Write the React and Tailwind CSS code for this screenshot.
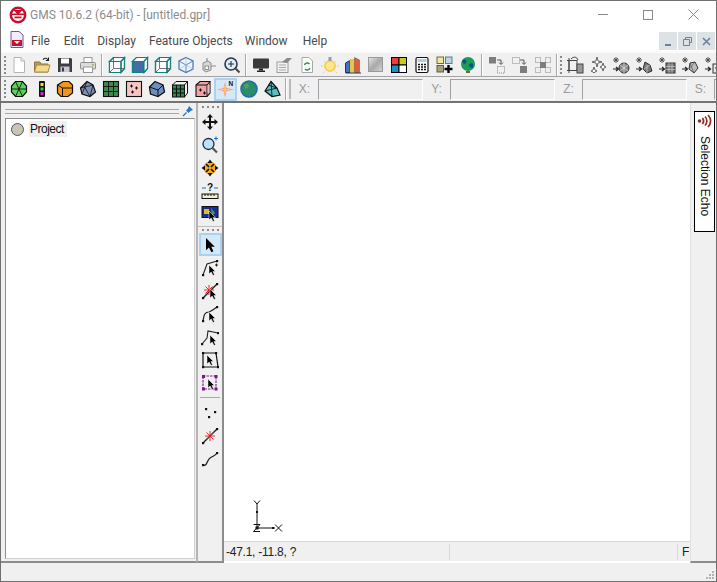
import React from 'react';

const S = ({ children, size = 18, className = '' }) => (
  <svg width={size} height={size} viewBox="0 0 18 18" className={`block shrink-0 ${className}`}>
    {children}
  </svg>
);

const Cube = ({ front, top = 'none', side = 'none', line = '#14807f', back }) => (
  <S>
    <path d="M5.500 1.500H16.500V12.500L13 16.500H1.500V5.500Z" fill="#fff" stroke={line} strokeWidth="1.200" />
    <path d="M1.500 5.500H13V16.500H1.500Z" fill={front} stroke={line} strokeWidth="1.200" />
    <path d="M1.500 5.500L5.500 1.500H16.500L13 5.500Z" fill={top} stroke={line} strokeWidth="1.200" />
    <path d="M13 5.500L16.500 1.500V12.500L13 16.500Z" fill={side} stroke={line} strokeWidth="1.200" />
    {back && <path d="M5.500 1.500V12.500H16.500M5.500 12.500L1.500 16.500" fill="none" stroke="#555" strokeWidth=".8" />}
  </S>
);

const Grip = () => (
  <div className="flex flex-col gap-[2px] w-[3px] shrink-0">
    <i className="block w-[2px] h-[2px] bg-[#8a8a8a]" />
    <i className="block w-[2px] h-[2px] bg-[#8a8a8a]" />
    <i className="block w-[2px] h-[2px] bg-[#8a8a8a]" />
    <i className="block w-[2px] h-[2px] bg-[#8a8a8a]" />
    <i className="block w-[2px] h-[2px] bg-[#8a8a8a]" />
  </div>
);

const GripH = () => (
  <div className="flex gap-[3px] justify-center py-[2px]">
    <i className="block w-[2px] h-[2px] bg-[#8a8a8a]" />
    <i className="block w-[2px] h-[2px] bg-[#8a8a8a]" />
    <i className="block w-[2px] h-[2px] bg-[#8a8a8a]" />
    <i className="block w-[2px] h-[2px] bg-[#8a8a8a]" />
  </div>
);

const Tool = ({ children, active }) => (
  <div className={`w-[23px] h-[23px] flex items-center justify-center shrink-0 ${active ? 'bg-[#d5e8f7] border-2 border-[#a9d2f0]' : ''}`}>
    {children}
  </div>
);

const Sep = () => <div className="w-[2px] h-[22px] mx-[2px] shrink-0 bg-[#a8a8a8] border-r border-white" />;

const Arrow = ({ x = 9, y = 7 }) => (
  <path transform={`translate(${x} ${y})`} d="M0 0V9L2.200 7L4 10.500L5.500 9.800L3.900 6.500H6.500Z" fill="#000" stroke="#fff" strokeWidth=".5" />
);

const GrayAdd = ({ children }) => (
  <S>
    <path d="M4 1V7M1 4H7M2 2L6 6M6 2L2 6" stroke="#444" strokeWidth=".9" />
    <path d="M1 13H6M4 11L6.500 13L4 15" stroke="#222" strokeWidth="1.200" fill="none" />
    {children}
  </S>
);

const toolbarOne = [
  <S><path d="M4 1.500H11L14.500 5V16.500H4Z" fill="#fff" stroke="#b4b4b4" /><path d="M11 1.500V5H14.500" fill="#eee" stroke="#b4b4b4" /></S>,
  <S><path d="M1.500 6H7L8 8H15V16H1.500Z" fill="#b89a58" stroke="#8b7440" /><path d="M3.500 9H17L15 16H1.500Z" fill="#f3d98e" stroke="#a98d4c" /><path d="M10 3.500C12 1.500 14 2 15 4M15.500 1.500V4.500H12.800" fill="none" stroke="#222" strokeWidth="1.100" /></S>,
  <S><path d="M2 2H15L16 3V16H2Z" fill="#3d3d44" /><rect x="5" y="2.500" width="8" height="5" fill="#fff" /><rect x="4.500" y="10.500" width="9" height="5.500" fill="#c7c9cf" /><rect x="6" y="11.500" width="2" height="4" fill="#3d3d44" /></S>,
  <S><rect x="5" y="1.500" width="8" height="5" fill="#fff" stroke="#9a9a9a" /><rect x="1.500" y="6.500" width="15" height="6.500" rx="1" fill="#dcdcdc" stroke="#8e8e8e" /><rect x="4.500" y="11" width="9" height="5.500" fill="#fff" stroke="#9a9a9a" /><rect x="13" y="8" width="2" height="1.500" fill="#a4b83c" /></S>,
  'sep',
  <Cube front="#fff" back />,
  <Cube front="#3f6ea8" side="#fff" top="#fff" />,
  <Cube front="none" back />,
  <S><path d="M9 1.500L16 5V13L9 16.500L2 13V5Z" fill="#eef3f9" stroke="#4a7fb5" strokeWidth="1.300" /><path d="M2 5L9 9L16 5M9 9V16.500" fill="none" stroke="#4a7fb5" strokeWidth=".9" /><path d="M9 1.500V9M2 13L9 9L16 13" fill="none" stroke="#a8c2dc" strokeWidth=".7" /></S>,
  <S><path d="M3 7L8 5L11 7V14L6 16L3 14Z" fill="#d8d8d8" stroke="#8c8c8c" /><rect x="5" y="10" width="3.500" height="3.500" fill="#fff" stroke="#777" strokeWidth=".8" /><path d="M11 10H16M7 2V5" stroke="#8c8c8c" strokeWidth="1.200" /></S>,
  <S><circle cx="8" cy="8" r="6" fill="#dfeefa" stroke="#263a4a" strokeWidth="1.600" /><path d="M5 8H11M8 5V11" stroke="#222" strokeWidth="1" /><path d="M12.500 12.500L16.500 16.500" stroke="#444" strokeWidth="2" /></S>,
  'sep',
  <S><rect x="1" y="2.500" width="16" height="10" rx="1" fill="#3a3a3a" /><rect x="7" y="12.500" width="4" height="2" fill="#222" /><rect x="5" y="14.500" width="8" height="1.500" fill="#222" /></S>,
  <S><rect x="2" y="6" width="11" height="10.500" fill="#f1f1f1" stroke="#9c9c9c" /><path d="M4 9H11M4 11.500H11M4 14H11" stroke="#aaa" /><path d="M7 6L12 2H17L12 7Z" fill="#888" /></S>,
  <S><path d="M4 1.500H11L14.500 5V16.500H4Z" fill="#fff" stroke="#a8a8a8" /><path d="M6.500 9A3 3 0 0 1 11.500 8M12 12A3 3 0 0 1 7 13" fill="none" stroke="#1f9d45" strokeWidth="1.500" /></S>,
  <S><circle cx="9" cy="10" r="5" fill="#ffe98a" stroke="#f4cf5f" strokeWidth="2" /><rect x="7.500" y="1" width="3" height="4" fill="#9b9b9b" /><path d="M2 10H0M18 10H16M3.500 15.500L2 17M14.500 15.500L16 17M3 5L4 6M15 5L14 6" stroke="#f4cf5f" /></S>,
  <S><path d="M1.500 7L5 5H6V16.500H1.500Z" fill="#3f76c4" stroke="#24354f" /><path d="M6 3H10.500V16.500H6Z" fill="#eac34a" /><path d="M10.500 1.500L15.500 4V16.500H10.500Z" fill="#d9603c" stroke="#704030" strokeWidth=".5" /><path d="M1.500 17H17" stroke="#24354f" /></S>,
  <div className="w-[15px] h-[15px] bg-gradient-to-br from-[#e4e4e4] via-[#a9a9a9] to-[#d2d2d2] border border-[#9a9a9a]" />,
  <S><rect x="1.500" y="1.500" width="7.500" height="7.500" fill="#f23b3b" stroke="#000" /><rect x="9" y="1.500" width="7.500" height="7.500" fill="#c9c91e" stroke="#000" /><rect x="1.500" y="9" width="7.500" height="7.500" fill="#1792c8" stroke="#000" /><rect x="9" y="9" width="7.500" height="7.500" fill="#fff" stroke="#000" /></S>,
  <S><rect x="3" y="1.500" width="12" height="15" rx="1.500" fill="#fff" stroke="#111" strokeWidth="1.200" /><rect x="4.500" y="3" width="9" height="3" fill="#a9d0ee" /><path d="M5 8.500H7M8 8.500H10M11 8.500H13M5 11H7M8 11H10M11 11H13M5 13.500H7M8 13.500H10M11 13.500H13" stroke="#111" strokeWidth="1.400" /></S>,
  <S><rect x="1" y="1" width="6.500" height="6.500" fill="#f2e6a0" stroke="#6e6a3a" /><rect x="9.500" y="1" width="6.500" height="6.500" fill="#bcd6e4" stroke="#5f7b88" /><rect x="1" y="9.500" width="6.500" height="6.500" fill="#a8a27a" stroke="#5f5d44" /><path d="M12.500 9V17M8.500 13H16.500" stroke="#000" strokeWidth="2.400" /></S>,
  <S><circle cx="9" cy="8" r="7" fill="#1b9a5b" /><path d="M3 5C6 2 8 4 7 7C5 9 4 7 3 5M10 8C13 6 15 8 14 11C12 13 10 11 10 8" fill="#124f86" /><rect x="7" y="15" width="4" height="2" fill="#8c5a2c" /></S>,
  'sep',
  <S><rect x="1" y="1" width="7" height="6.500" fill="#7d7d7d" /><path d="M9 4H13V8M11 6.500L13 8.500L15 6.500" fill="none" stroke="#555" /><rect x="9.500" y="10.500" width="7" height="6.500" fill="none" stroke="#888" strokeDasharray="1 1" /></S>,
  <S><rect x="1.500" y="1.500" width="7" height="6" fill="none" stroke="#888" strokeDasharray="1 1" /><path d="M9 4H13V8M11 6.500L13 8.500L15 6.500" fill="none" stroke="#555" /><rect x="9" y="10" width="7" height="7" fill="#7d7d7d" /></S>,
  <S><rect x="1.500" y="1.500" width="5" height="5" fill="none" stroke="#888" strokeDasharray="1 1" /><rect x="11.500" y="1.500" width="5" height="5" fill="none" stroke="#888" strokeDasharray="1 1" /><rect x="1.500" y="11.500" width="5" height="5" fill="none" stroke="#888" strokeDasharray="1 1" /><rect x="11.500" y="11.500" width="5" height="5" fill="none" stroke="#888" strokeDasharray="1 1" /><rect x="6" y="6" width="6" height="6" fill="#7d7d7d" /></S>,
  'sep',
];

const toolbarOneEnd = [
  <S><rect x="3" y="4.500" width="8" height="10" fill="none" stroke="#444" /><rect x="11" y="8" width="6" height="9" fill="#999" stroke="#444" /><path d="M3 2V17M1 4.500H5M1 14.500H5M5 3C8 0 11 1 12 4" fill="none" stroke="#444" /></S>,
  <S><path d="M8 1L9 5L13 6L9 7L8 11L7 7L3 6L7 5ZM14 7L15 10L17 11L15 12L14 15L13 12L11 11L13 10ZM5 11L6 14L8 15L6 16L5 17L4 16L2 15L4 14Z" fill="#fff" stroke="#555" strokeWidth=".9" /></S>,
  <GrayAdd><circle cx="12" cy="12" r="5" fill="#888" stroke="#333" /><path d="M8 9L16 15M16 9L8 15M12 7V17" stroke="#ddd" strokeWidth=".8" /></GrayAdd>,
  <GrayAdd><path d="M10 6L15 9L17 15L12 17L8 13Z" fill="#777" stroke="#333" /><path d="M9 13L15 9M12 17L12 9" stroke="#ccc" strokeWidth=".7" /></GrayAdd>,
  <GrayAdd><rect x="8" y="7" width="9" height="10" fill="#777" stroke="#333" /><path d="M8 10.500H17M8 13.500H17M11 7V17M14 7V17" stroke="#ccc" strokeWidth=".7" /></GrayAdd>,
  <GrayAdd><path d="M9 7L14 6L17 12L13 17L8 13Z" fill="#bbb" stroke="#333" /><path d="M9 7L13 17M14 6L8 13" stroke="#555" strokeWidth=".7" /></GrayAdd>,
  <GrayAdd><rect x="9" y="8" width="8" height="9" fill="#e8e8e8" stroke="#333" /><path d="M11 12H15M13 10V14" stroke="#333" /></GrayAdd>,
];

const toolbarTwo = [
  <S><path d="M5.500 1.500H12.500L16.500 6V12L12.500 16.500H5.500L1.500 12V6Z" fill="#5bd35b" stroke="#111" strokeWidth="1.200" /><path d="M1.500 9H16.500M5.500 1.500L12.500 16.500M12.500 1.500L5.500 16.500" stroke="#111" strokeWidth=".9" /></S>,
  <S><rect x="6" y="1" width="6" height="16" rx="1" fill="#111" /><rect x="7.500" y="3" width="3" height="3" fill="#e8e82a" /><rect x="7.500" y="7.500" width="3" height="3" fill="#35c935" /><rect x="7.500" y="12" width="3" height="3" fill="#d820d8" /></S>,
  <S><path d="M1.500 5L7 1.500H13L16.500 5V13L12 16.500H5L1.500 13Z" fill="#f1981a" stroke="#111" strokeWidth="1.200" /><path d="M1.500 5L6.500 8H16.500M6.500 8V16" fill="none" stroke="#111" /></S>,
  <S><path d="M8 1.500L14 5L16.500 12L11 16.500L3 14L1.500 8Z" fill="#7a8fb8" stroke="#111" strokeWidth="1.200" /><path d="M1.500 8L14 5M3 14L8 1.500M11 16.500L5 6M11 16.500L14 5" stroke="#111" strokeWidth=".8" /></S>,
  <S><rect x="1.500" y="1.500" width="15" height="15" fill="#3f8b4f" stroke="#111" strokeWidth="1.100" /><path d="M6.500 1.500V16.500M11.500 1.500V16.500M1.500 6.500H16.500M1.500 11.500H16.500" stroke="#111" strokeWidth=".9" /></S>,
  <S><rect x="1.500" y="1.500" width="15" height="15" fill="#f7c4c4" stroke="#111" strokeWidth="1.100" /><path d="M5 6H8M6.500 4.500V7.500M10 8H13M11.500 6.500V9.500M6 12H9M7.500 10.500V13.500" stroke="#111" /></S>,
  <S><path d="M7 1.500L15 5L16.500 12L10 16.500L2.500 14L1.500 7Z" fill="#6d8fc0" stroke="#111" strokeWidth="1.300" /><path d="M1.500 7L10 10L15 5M10 10V16.500" fill="none" stroke="#111" /></S>,
  <S><rect x="1.500" y="5" width="12" height="12" fill="#2e8a48" stroke="#111" /><path d="M1.500 5L5 1.500H16.500V13L13.500 17M13.500 5L16.500 1.500M5.500 5V17M9.500 5V17M1.500 9H13.500M1.500 13H13.500" fill="none" stroke="#111" /></S>,
  <S><path d="M2 5L6 1.500H16V13L13 16.500H2Z" fill="#f0a3a3" stroke="#111" strokeWidth="1.100" /><path d="M2 5H13V16.500M13 5L16 1.500" fill="none" stroke="#111" /><path d="M5 10H8M6.500 8.500V11.500M9 13H12M10.500 11.500V14.500" stroke="#111" /><rect x="13.500" y="5" width="2" height="8" fill="#d9c2c2" /></S>,
  <S><path d="M8 2L9.500 8L17 9.500L9.500 11L8 17.500L6.500 11L0 9.500L6.500 8Z" fill="#f79a86" /><path d="M8 5.500V13.500M3.500 9.500H12.500" stroke="#f7d65a" strokeWidth="1.200" /><text x="11.500" y="6" fontSize="6.500" fontWeight="700" fontFamily="Liberation Sans, sans-serif" fill="#111">N</text></S>,
  <S><circle cx="9" cy="9" r="8" fill="#2a8d6b" /><circle cx="9" cy="9" r="8" fill="none" stroke="#1f6fa8" strokeWidth="1.600" /><path d="M4 5C8 2 10 5 8 8C6 10 4 8 4 5" fill="#49a84a" /></S>,
  <S><path d="M8 1.500L14 8L17 15L9 16.500L2 11Z" fill="#58c2c2" stroke="#111" strokeWidth="1.200" /><path d="M5 5L14 8M2 11L14 8M9 16.500L8 1.500" stroke="#111" strokeWidth=".9" /></S>,
];

const Coord = ({ label, w }) => (
  <div className="flex items-center shrink-0">
    <span className="w-[27px] text-center text-[12px] text-[#9a9a9a]">{label}</span>
    <div className={`h-[21px] bg-[#f0f0f0] border border-t-[#a0a0a0] border-l-[#a0a0a0] border-r-white border-b-white ${w}`} />
  </div>
);

const sideTop = [
  <S><path d="M9 1L12 4.500H10V8H13.500V6L17 9L13.500 12V10H10V13.500H12L9 17L6 13.500H8V10H4.500V12L1 9L4.500 6V8H8V4.500H6Z" fill="#111" /></S>,
  <S><circle cx="7.500" cy="8" r="5.500" fill="#bfe0f6" stroke="#1e3040" strokeWidth="1.300" /><path d="M11.500 12L16 16.500" stroke="#555" strokeWidth="2.200" /><path d="M13 2.500H17M15 .5V4.500" stroke="#1d6fc0" strokeWidth="1" /></S>,
  <S><circle cx="9" cy="9" r="6.500" fill="#f5a81c" /><path d="M9 .5L11.500 4H6.500ZM9 17.500L6.500 14H11.500ZM.5 9L4 6.500V11.500ZM17.500 9L14 11.500V6.500Z" fill="#111" /><path d="M5 5L8 8M13 5L10 8M5 13L8 10M13 13L10 10" stroke="#111" strokeWidth="1.600" /></S>,
  <S><text x="9" y="9" textAnchor="middle" fontSize="10" fontWeight="700" fontFamily="Liberation Sans, sans-serif" fill="#111">?</text><path d="M1 6H5M17 6H13" stroke="#1d6fc0" /><rect x="1" y="12" width="16" height="4.500" fill="#f6f0c8" stroke="#111" /><path d="M4 12V14M7 12V14M10 12V14M13 12V14" stroke="#111" /></S>,
  <S><rect x="1" y="1.500" width="16" height="11" fill="#1c2c9c" stroke="#111" /><path d="M3 4H8V9H3Z" fill="#d8c020" /><path d="M10 3L14 8L11 11Z" fill="#3fa03f" /><Arrow x={8} y={6} /></S>,
];

const Cur = ({ children, x = 9, y = 7 }) => (
  <S>
    {children}
    <Arrow x={x} y={y} />
  </S>
);

const dot = (x, y) => <rect x={x - 1} y={y - 1} width="2.200" height="2.200" fill="#111" />;

const sideMiddle = [
  <S><path transform="translate(5 2) scale(1.350)" d="M0 0V9L2.200 7L4 10.500L5.500 9.800L3.900 6.500H6.500Z" fill="#000" /></S>,
  <Cur x={8} y={6}><path d="M2 16L6 5L16 2" fill="none" stroke="#222" strokeWidth="1.100" /><path d="M14 6H17M15.500 4.500V7.500" stroke="#222" />{dot(2, 16)}{dot(16, 2)}</Cur>,
  <Cur><path d="M2 16L16 2" stroke="#222" strokeWidth="1.400" /><path d="M8 3V13M3 8H13M4.500 4.500L11.500 11.500M11.500 4.500L4.500 11.500" stroke="#e8141c" strokeWidth=".9" />{dot(2, 16)}{dot(16, 2)}</Cur>,
  <Cur x={8} y={7}><path d="M2 16C3 11 3 7 8 7C11 6 13 4 16 2" fill="none" stroke="#222" strokeWidth="1.200" />{dot(2, 16)}{dot(16, 2)}</Cur>,
  <Cur x={9} y={7}><path d="M1 16L6 10L7 3L17 5" fill="none" stroke="#222" strokeWidth="1.100" />{dot(1, 16)}{dot(17, 5)}</Cur>,
  <Cur x={6} y={4}><path d="M2 2H15L17 16H2Z" fill="none" stroke="#111" strokeWidth="1.200" />{dot(2, 2)}{dot(15, 2)}{dot(17, 16)}{dot(2, 16)}</Cur>,
  <Cur x={7} y={5}><rect x="2" y="2" width="13" height="13" fill="none" stroke="#8a1f9c" strokeWidth="1.200" strokeDasharray="2.500 1" /><rect x="1" y="1" width="3" height="3" fill="#7d128f" /><rect x="13.500" y="1" width="3" height="3" fill="#7d128f" /><rect x="1" y="13.500" width="3" height="3" fill="#7d128f" /><rect x="13.500" y="13.500" width="3" height="3" fill="#7d128f" /></Cur>,
];

const sideBottom = [
  <S>{dot(5, 5)}{dot(14, 8)}{dot(8, 13)}</S>,
  <S><path d="M2 16L16 2" stroke="#222" strokeWidth="1.400" /><path d="M9 4V14M4 9H14M5.500 5.500L12.500 12.500M12.500 5.500L5.500 12.500" stroke="#e8141c" strokeWidth=".9" />{dot(2, 16)}{dot(16, 2)}</S>,
  <S><path d="M2 15C6 17 6 10 9 8C12 6 14 6 16 3" fill="none" stroke="#222" strokeWidth="1.300" />{dot(2, 15)}{dot(16, 3)}</S>,
];

export default function App() {
  return (
    <div className="w-[717px] h-[582px] flex flex-col overflow-hidden bg-white border border-[#6f6f6f] font-['Liberation_Sans',sans-serif]">
      {/* title bar */}
      <div className="h-[27px] flex items-center shrink-0 pl-[8px]">
        <svg width="18" height="18" viewBox="0 0 18 18" className="shrink-0">
          <circle cx="9" cy="9" r="7.200" fill="#fff" stroke="#c8102e" strokeWidth="2.400" />
          <rect x="2" y="7.500" width="14" height="1.600" fill="#c8102e" />
          <path d="M4.500 4H13.500L9 9Z" fill="#c8102e" />
          <rect x="5.500" y="10.500" width="7" height="1.800" fill="#c8102e" />
        </svg>
        <span className="ml-[3px] text-[12px] text-[#8c8c8c] font-['Roboto',sans-serif]">GMS 10.6.2 (64-bit) - [untitled.gpr]</span>
        <div className="ml-auto flex items-center text-[#777]">
          <div className="w-[45px] flex justify-center"><div className="w-[10px] h-px bg-[#8a8a8a]" /></div>
          <div className="w-[46px] flex justify-center"><div className="w-[10px] h-[10px] border border-[#8a8a8a]" /></div>
          <div className="w-[45px] flex justify-center">
            <svg width="11" height="11" viewBox="0 0 11 11"><path d="M.5.5L10.5 10.5M10.5.5L.5 10.5" stroke="#8a8a8a" /></svg>
          </div>
        </div>
      </div>

      {/* menu bar */}
      <div className="h-[23px] flex items-center shrink-0 pl-[9px] pr-px text-[12px] text-[#4a4a4a] font-['Roboto',sans-serif]">
        <svg width="14" height="17" viewBox="0 0 14 17" className="shrink-0">
          <path d="M1 .5H9L13 4V16.500H1Z" fill="#f4eefa" stroke="#6a5a9c" />
          <rect x="2" y="9" width="10" height="6" fill="#c8102e" />
          <path d="M4 10H10L7 13Z" fill="#fff" />
        </svg>
        <div className="flex mt-[2px]">
          <span className="ml-[7px]">File</span>
          <span className="ml-[14px]">Edit</span>
          <span className="ml-[13px]">Display</span>
          <span className="ml-[13px]">Feature Objects</span>
          <span className="ml-[12px]">Window</span>
          <span className="ml-[15px]">Help</span>
        </div>
        <div className="ml-auto flex gap-px self-end mb-px">
          <div className="w-[18px] h-[18px] bg-[#dde2e7] flex items-end justify-center pb-[4px]"><div className="w-[6px] h-[2px] bg-[#6e8295]" /></div>
          <div className="w-[18px] h-[18px] bg-[#dde2e7] flex items-center justify-center">
            <svg width="9" height="9" viewBox="0 0 9 9"><path d="M2.500 2.500V.5H8.500V5.500H6.500M.5 2.500H6.500V8.500H.5Z" fill="none" stroke="#6e8295" /></svg>
          </div>
          <div className="w-[18px] h-[18px] bg-[#dde2e7] flex items-center justify-center">
            <svg width="9" height="9" viewBox="0 0 9 9"><path d="M1 1L8 8M8 1L1 8" stroke="#6e8295" strokeWidth="1.600" /></svg>
          </div>
        </div>
      </div>

      {/* toolbar rows */}
      <div className="h-[26px] bg-[#f0f0f0] border-t-2 border-[#fafafa] border-b border-b-[#a3a3a3] flex items-center pl-[3px] shrink-0 overflow-hidden">
        <Grip />
        <div className="w-[3px]" />
        {toolbarOne.map((t, i) => (t === 'sep' ? <Sep key={i} /> : <Tool key={i}>{t}</Tool>))}
        <Grip />
        <div className="w-[2px]" />
        {toolbarOneEnd.map((t, i) => <Tool key={i}>{t}</Tool>)}
      </div>
      <div className="h-[26px] bg-[#f0f0f0] border-b-2 border-[#747474] flex items-center pl-[3px] shrink-0 overflow-hidden">
        <Grip />
        <div className="w-[3px]" />
        {toolbarTwo.map((t, i) => <Tool key={i} active={i === 9}>{t}</Tool>)}
        <Sep />
        <div className="w-[2px] h-[20px] bg-[#b8b8b8] shrink-0" />
        <div className="w-px" />
        <Coord label="X:" w="w-[105px]" />
        <div className="w-px" />
        <Coord label="Y:" w="w-[105px]" />
        <div className="w-px" />
        <Coord label="Z:" w="w-[105px]" />
        <div className="w-px" />
        <Coord label="S:" w="w-[20px]" />
      </div>

      {/* main */}
      <div className="flex-1 flex min-h-0 bg-[#f0f0f0]">
        {/* project panel */}
        <div className="w-[195px] shrink-0 flex flex-col pl-[4px] pr-px pt-px pb-[2px] border-b-2 border-[#8c8c8c]">
          <div className="h-[14px] flex items-center shrink-0">
            <div className="flex-1 h-[5px] border-y border-[#a8a8a8]" />
            <svg width="12" height="12" viewBox="0 0 12 12" className="ml-[3px] mr-px">
              <path d="M7 1L11 5L8.500 6L6.500 8L4 5.500L6 3.500Z" fill="#2a76c6" />
              <path d="M4.500 7.500L1 11" stroke="#2a76c6" strokeWidth="1.200" />
            </svg>
          </div>
          <div className="flex-1 bg-white border border-[#8c8c8c] border-r-[#d0d0d0] border-b-[#d0d0d0] pt-[2px] pl-[5px]">
            <div className="flex items-center">
              <div className="w-[13px] h-[13px] rounded-full bg-[#c9c5b5] border border-[#555]" />
              <span className="ml-[5px] pl-px pr-[3px] bg-[#f0f0f0] text-[12px] leading-[16px] text-[#111] tracking-[-0.5px]">Project</span>
            </div>
          </div>
        </div>

        {/* vertical tools */}
        <div className="w-[28px] shrink-0 flex flex-col items-center pt-px border-l-2 border-[#b4b4b4] border-r-2 border-r-[#8c8c8c] border-b-2 border-b-[#8c8c8c]">
          <GripH />
          <div className="flex flex-col">
            {sideTop.map((t, i) => <Tool key={i}>{t}</Tool>)}
          </div>
          <div className="h-px w-full bg-[#c0c0c0] mt-px" />
          <GripH />
          <div className="flex flex-col">
            {sideMiddle.map((t, i) => <Tool key={i} active={i === 0}>{t}</Tool>)}
          </div>
          <div className="h-px w-[20px] bg-[#a8a8a8] my-[3px]" />
          <div className="flex flex-col">
            {sideBottom.map((t, i) => <Tool key={i}>{t}</Tool>)}
          </div>
        </div>

        {/* canvas */}
        <div className="flex-1 min-w-0 flex flex-col border-b-2 border-white">
          <div className="flex-1 bg-white flex flex-col justify-end pl-[29px] pb-[6px]">
            <svg width="36" height="36" viewBox="0 0 36 36">
              <path d="M4 29V5M4 29H22M1 1.500L4 5L7 1.500M22 25.500L29 32.500M29 25.500L22 32.500" fill="none" stroke="#111" />
              <path d="M.5 25.500H7L.5 32.500H7" fill="none" stroke="#111" />
              <rect x="2.500" y="27.500" width="3" height="3" fill="#111" />
              <rect x="3" y="12" width="2" height="2" fill="#111" />
              <rect x="19" y="28" width="2" height="2" fill="#111" />
            </svg>
          </div>
          <div className="h-[20px] shrink-0 flex items-center border-t border-[#d8d8d8] text-[12px] text-[#222]">
            <span className="pl-[2px] w-[225px] tracking-[-0.25px]">-47.1, -11.8, ?</span>
            <div className="w-px h-[16px] bg-[#d8d8d8]" />
            <div className="flex-1" />
            <div className="w-px h-[16px] bg-[#d8d8d8]" />
            <span className="pl-[4px] w-[12px]">F</span>
          </div>
        </div>

        {/* right dock */}
        <div className="w-[26px] shrink-0 border-l border-l-[#e0e0e0] border-b-2 border-b-[#8c8c8c] pl-[3px] pt-[8px]">
          <div className="w-[21px] h-[121px] bg-white border border-black flex flex-col items-center pt-[2px]">
            <svg width="16" height="14" viewBox="0 0 16 14" className="shrink-0">
              <circle cx="2.500" cy="7" r="1.800" fill="#8f2f2a" />
              <path d="M5.500 4C7 6 7 8 5.500 10M8 2.500C10.500 5 10.500 9 8 11.500M11 1C14.500 4.500 14.500 9.500 11 13" fill="none" stroke="#8f2f2a" strokeWidth="1.700" />
            </svg>
            <span className="mt-[8px] text-[12px] leading-[19px] text-[#111] [writing-mode:vertical-rl]">Selection Echo</span>
          </div>
        </div>
      </div>

      {/* status bar */}
      <div className="h-[18px] shrink-0 bg-[#f0f0f0] flex items-end justify-end">
        <svg width="10" height="10" viewBox="0 0 10 10" className="mr-px mb-px">
          <path d="M7 1h2v2H7zM4 4h2v2H4zM7 4h2v2H7zM1 7h2v2H1zM4 7h2v2H4zM7 7h2v2H7z" fill="#b4b4b4" />
        </svg>
      </div>
    </div>
  );
}
